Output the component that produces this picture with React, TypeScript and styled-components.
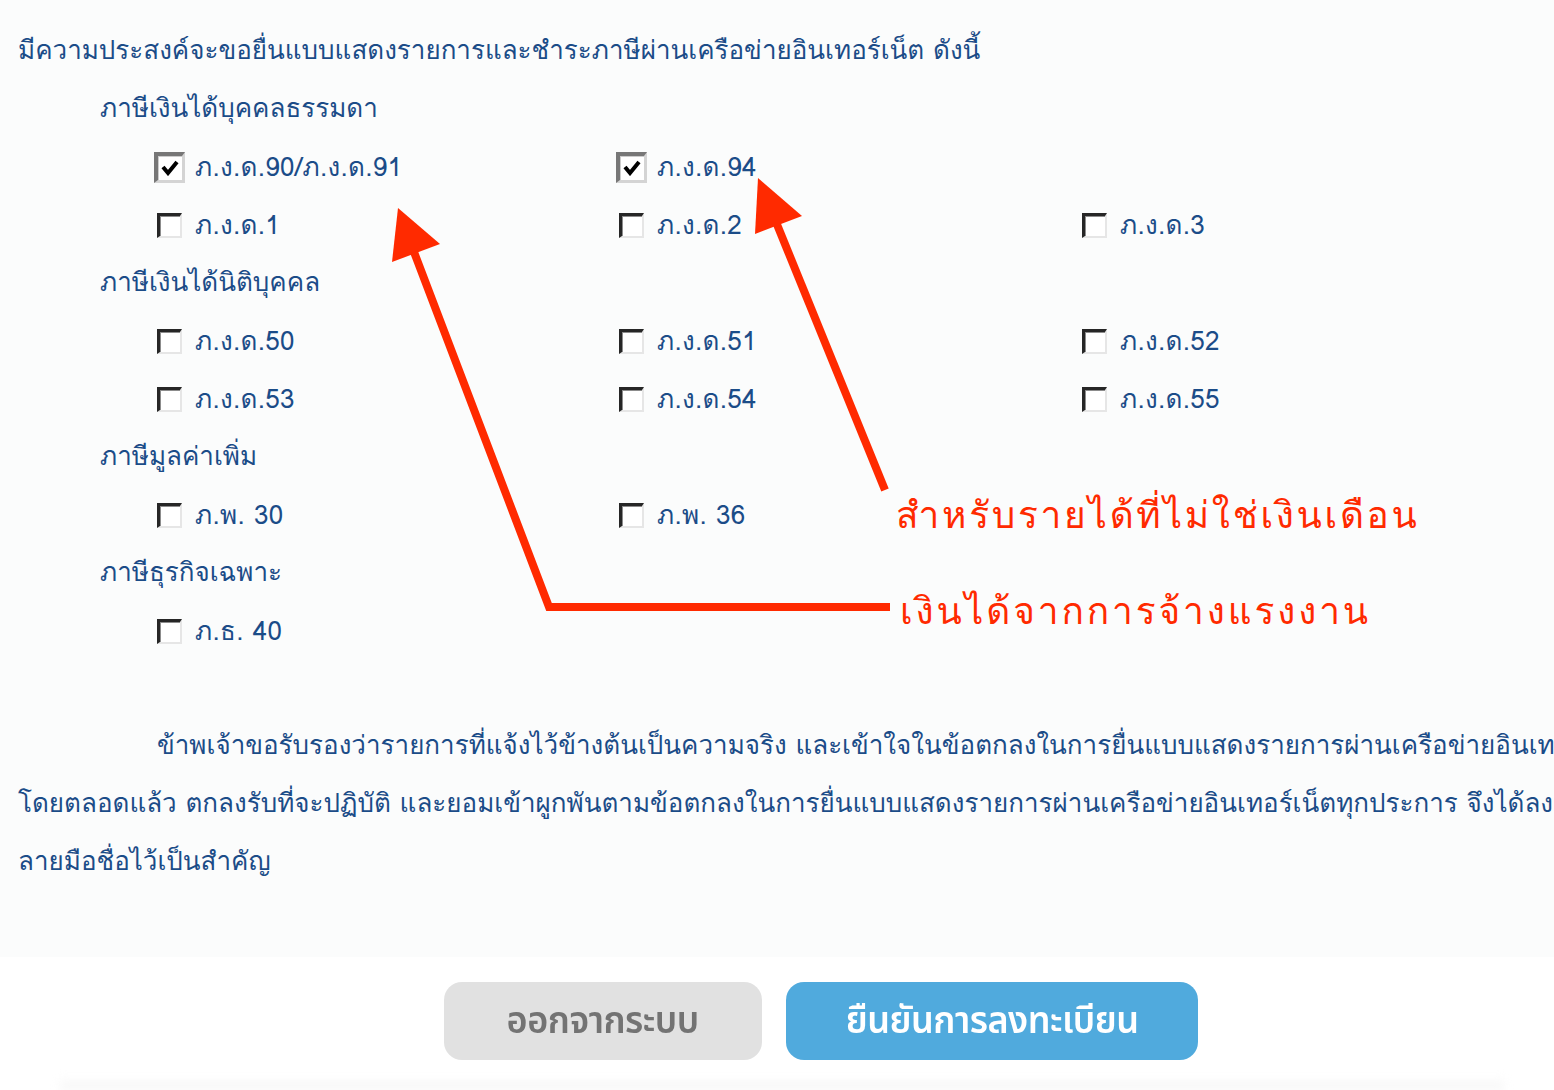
import React from 'react';
import styled, { createGlobalStyle } from 'styled-components';

const Global = createGlobalStyle`
  html, body { margin: 0; padding: 0; background: #ffffff; }
  body { overflow: hidden; font-family: Tahoma, Loma, Garuda, "Noto Sans Thai", "Noto Sans", "DejaVu Sans", sans-serif; }
`;

const Page = styled.div`
  position: relative;
  width: 1554px;
  height: 1090px;
  overflow: hidden;
  background: #ffffff;
`;

const Form = styled.div`
  background: #fbfcfc;
  padding: 21px 0 67px 18px;
  color: #1b4c88;
  font-size: 26px;
`;

const Line = styled.div<{ indent?: number }>`
  height: 58px;
  line-height: 58px;
  white-space: nowrap;
  padding-left: ${({ indent }) => indent || 0}px;
`;

const Grid = styled.div`
  display: grid;
  grid-template-columns: 462px 463px 462px;
  padding-left: 136px;
`;

const Item = styled.label`
  display: flex;
  align-items: center;
  gap: 10px;
  height: 58px;
  white-space: nowrap;
  letter-spacing: 0.3px;
`;

const Slot = styled.span`
  width: 31px;
  height: 31px;
  flex: none;
  display: flex;
  align-items: center;
  justify-content: center;
  margin-top: 3px;
`;

const Box = styled.span<{ checked?: boolean }>`
  box-sizing: border-box;
  width: ${({ checked }) => (checked ? 31 : 25)}px;
  height: ${({ checked }) => (checked ? 31 : 25)}px;
  display: flex;
  align-items: center;
  justify-content: center;
  background: #ffffff;
  border-style: solid;
  border-width: ${({ checked }) => (checked ? '4px 3px 3px 4px' : '3px 2px 2px 3px')};
  border-color: ${({ checked }) =>
    checked ? '#777777 #d4d4d4 #d4d4d4 #777777' : '#262626 #e6e6e6 #e6e6e6 #262626'};
  box-shadow: ${({ checked }) => (checked ? 'inset 1px 1px 0 #cccccc' : 'inset 1px 1px 0 #8c8c8c')};
`;

const Statement = styled.div`
  margin-top: 57px;
`;

const Bar = styled.div`
  display: flex;
  justify-content: center;
  gap: 24px;
  width: 1642px;
  padding-top: 25px;
`;

const Button = styled.button<{ primary?: boolean }>`
  height: 78px;
  width: ${({ primary }) => (primary ? 412 : 318)}px;
  border: none;
  border-radius: 18px;
  background: ${({ primary }) => (primary ? '#50aadd' : '#e1e1e1')};
  color: ${({ primary }) => (primary ? '#ffffff' : '#737373')};
  font-family: "Noto Sans Thai", Tahoma, "Noto Sans", sans-serif;
  font-size: 34px;
  font-weight: 600;
  padding: 0;
`;

const ButtonText = styled.span`
  display: inline-block;
  transform: scale(1.06, 1.12);
  letter-spacing: -0.5px;
`;

const Shade = styled.div`
  position: absolute;
  left: 60px;
  right: 50px;
  bottom: 0;
  height: 14px;
  background: linear-gradient(to bottom, rgba(240, 240, 240, 0), rgba(236, 236, 236, 0.55));
  filter: blur(4px);
`;

const Overlay = styled.svg`
  position: absolute;
  left: 0;
  top: 0;
  pointer-events: none;
`;

const Note = styled.div<{ x: number; y: number; spacing: number }>`
  position: absolute;
  left: ${({ x }) => x}px;
  top: ${({ y }) => y}px;
  color: #ff2a00;
  font-size: 37px;
  letter-spacing: ${({ spacing }) => spacing}px;
  line-height: 50px;
  white-space: nowrap;
  font-family: Loma, Garuda, "Noto Sans Thai", "DejaVu Sans", sans-serif;
`;

const Check = () => (
  <svg width="18" height="16" viewBox="0 0 18 16">
    <path d="M2 7 L7 13 L16 2" fill="none" stroke="#000" strokeWidth="4" />
  </svg>
);

type Opt = { label: string; checked?: boolean } | null;

const Row = ({ items }: { items: Opt[] }) => (
  <Grid>
    {items.map((o, i) =>
      o ? (
        <Item key={i}>
          <Slot>
            <Box checked={o.checked}>{o.checked && <Check />}</Box>
          </Slot>
          {o.label}
        </Item>
      ) : (
        <span key={i} />
      )
    )}
  </Grid>
);

const App: React.FC = () => {
  return (
    <Page>
      <Global />
      <Form>
        <Line>มีความประสงค์จะขอยื่นแบบแสดงรายการและชำระภาษีผ่านเครือข่ายอินเทอร์เน็ต ดังนี้</Line>
        <Line indent={82}>ภาษีเงินได้บุคคลธรรมดา</Line>
        <Row items={[{ label: 'ภ.ง.ด.90/ภ.ง.ด.91', checked: true }, { label: 'ภ.ง.ด.94', checked: true }, null]} />
        <Row items={[{ label: 'ภ.ง.ด.1' }, { label: 'ภ.ง.ด.2' }, { label: 'ภ.ง.ด.3' }]} />
        <Line indent={82}>ภาษีเงินได้นิติบุคคล</Line>
        <Row items={[{ label: 'ภ.ง.ด.50' }, { label: 'ภ.ง.ด.51' }, { label: 'ภ.ง.ด.52' }]} />
        <Row items={[{ label: 'ภ.ง.ด.53' }, { label: 'ภ.ง.ด.54' }, { label: 'ภ.ง.ด.55' }]} />
        <Line indent={82}>ภาษีมูลค่าเพิ่ม</Line>
        <Row items={[{ label: 'ภ.พ. 30' }, { label: 'ภ.พ. 36' }, null]} />
        <Line indent={82}>ภาษีธุรกิจเฉพาะ</Line>
        <Row items={[{ label: 'ภ.ธ. 40' }, null, null]} />
        <Statement>
          <Line indent={139}>ข้าพเจ้าขอรับรองว่ารายการที่แจ้งไว้ข้างต้นเป็นความจริง และเข้าใจในข้อตกลงในการยื่นแบบแสดงรายการผ่านเครือข่ายอินเทอร์เน็ต</Line>
          <Line>โดยตลอดแล้ว ตกลงรับที่จะปฏิบัติ และยอมเข้าผูกพันตามข้อตกลงในการยื่นแบบแสดงรายการผ่านเครือข่ายอินเทอร์เน็ตทุกประการ จึงได้ลงลายมือชื่อไว้</Line>
          <Line>ลายมือชื่อไว้เป็นสำคัญ</Line>
        </Statement>
      </Form>
      <Bar>
        <Button><ButtonText>ออกจากระบบ</ButtonText></Button>
        <Button primary><ButtonText>ยืนยันการลงทะเบียน</ButtonText></Button>
      </Bar>
      <Shade />

      <Overlay width="1554" height="957" viewBox="0 0 1554 957">
        <g fill="#ff2a00" stroke="none">
          <polygon points="398,208 440,244 392,262" />
          <polygon points="758,178 802,216 755,234" />
        </g>
        <g fill="none" stroke="#ff2a00" strokeWidth="8" strokeLinejoin="miter">
          <polyline points="890,607 549,607 414,252" />
          <line x1="885" y1="490" x2="776" y2="222" />
        </g>
      </Overlay>
      <Note x={896} y={490} spacing={2.7}>สำหรับรายได้ที่ไม่ใช่เงินเดือน</Note>
      <Note x={900} y={586} spacing={2.9}>เงินได้จากการจ้างแรงงาน</Note>
    </Page>
  );
};

export default App;
